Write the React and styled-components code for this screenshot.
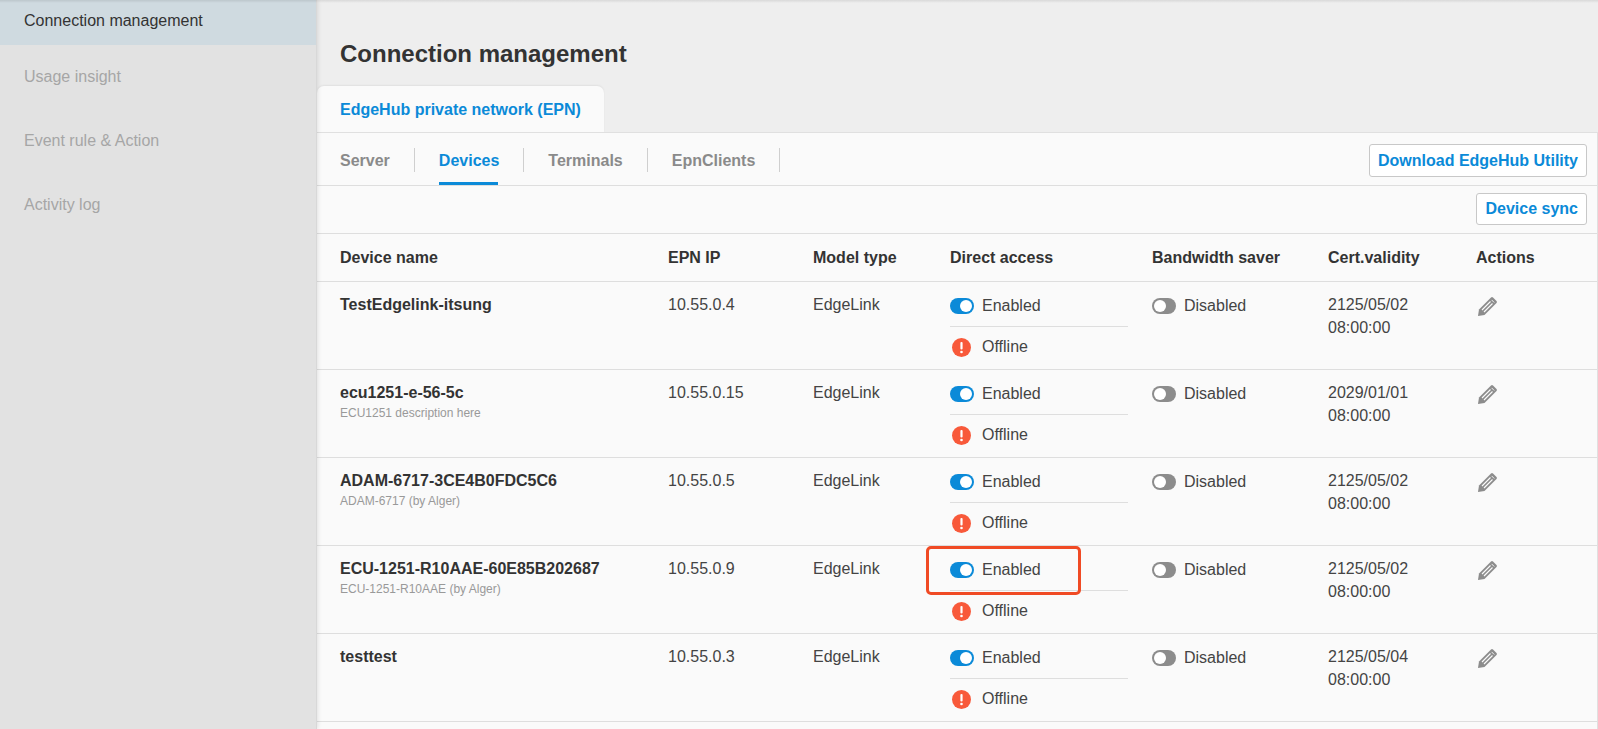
import React from 'react'
import styled, { createGlobalStyle } from 'styled-components'

const GlobalStyle = createGlobalStyle`
  html, body {
    margin: 0;
    height: 100%;
    overflow: hidden;
    background: #eee;
    font-family: "Liberation Sans", Arial, sans-serif;
    color: #333;
  }
`

const Page = styled.div`
  position: relative;
  display: flex;
  height: 729px;
  width: 1598px;
  overflow: hidden;
  /* soft shadow of the header that is scrolled out of the picture */
  &::after {
    content: '';
    position: absolute;
    left: 0;
    right: 0;
    top: 0;
    height: 3px;
    background: linear-gradient(rgba(0, 0, 0, 0.09), rgba(0, 0, 0, 0));
    z-index: 2;
  }
`

const Sidebar = styled.nav`
  flex: 0 0 317px;
  box-sizing: border-box;
  background: #e2e2e2;
  border-right: 1px solid #d8d8d8;
  box-shadow: 1px 0 4px rgba(0, 0, 0, 0.1);
  position: relative;
  z-index: 1;
`

const NavItem = styled.div`
  height: ${p => p.$h}px;
  padding: ${p => p.$top}px 0 0 24px;
  box-sizing: border-box;
  font-size: 16px;
  line-height: 20px;
  color: ${p => (p.$active ? '#333' : '#a6a6a6')};
  background: ${p => (p.$active ? '#cfdae0' : 'transparent')};
`

const Main = styled.main`
  flex: 1;
  min-width: 0;
  display: flex;
  flex-direction: column;
`

const Title = styled.h1`
  margin: 0;
  height: 86px;
  padding: 40px 0 0 23px;
  box-sizing: border-box;
  font-size: 24px;
  line-height: 27px;
  font-weight: 700;
  color: #333;
`

const TabStrip = styled.div`
  display: flex;
  height: 47px;
`

const Tab = styled.div`
  width: 287px;
  box-sizing: border-box;
  padding: 15px 0 0 23px;
  background: #fafafa;
  border-radius: 7px 7px 0 0;
  box-shadow: 0 -1px 2px rgba(0, 0, 0, 0.06);
  color: #0b8ad8;
  font-size: 16px;
  line-height: 18px;
  font-weight: 700;
`

const Panel = styled.section`
  flex: 1;
  background: #fafafa;
  border-top: 1px solid #e0e0e0;
  margin-top: -1px;
  border-right: 1px solid #e0e0e0;
`

const SubBar = styled.div`
  display: flex;
  align-items: flex-start;
  justify-content: space-between;
  height: 53px;
  box-sizing: border-box;
  border-bottom: 1px solid #dedede;
  padding: 0 10px 0 23px;
`

const SubTabs = styled.div`
  display: flex;
  height: 52px;
`

const SubTab = styled.div`
  position: relative;
  height: 100%;
  box-sizing: border-box;
  padding: 18px 25px 0 0;
  margin-right: 24px;
  font-size: 16px;
  line-height: 20px;
  font-weight: 700;
  color: ${p => (p.$active ? '#0b8ad8' : '#8a8a8a')};
  border-bottom: 3px solid transparent;
  &::after {
    content: '';
    position: absolute;
    right: 0;
    top: 15px;
    height: 24px;
    width: 1px;
    background: #cfcfcf;
  }
  &::before {
    content: '';
    display: ${p => (p.$active ? 'block' : 'none')};
    position: absolute;
    left: 0;
    right: 26px;
    bottom: -3px;
    height: 3px;
    background: #0b8ad8;
  }
`

const OutlineButton = styled.button`
  height: 33px;
  padding: 0 8px;
  box-sizing: border-box;
  background: #fff;
  border: 1px solid #c8c8c8;
  border-radius: 3px;
  color: #0b8ad8;
  font-family: inherit;
  font-size: 16px;
  font-weight: 700;
  margin-top: 11px;
`

const ActionBar = styled.div`
  display: flex;
  justify-content: flex-end;
  height: 48px;
  box-sizing: border-box;
  border-bottom: 1px solid #dedede;
  padding-right: 10px;
  ${OutlineButton} {
    height: 32px;
    margin-top: 7px;
  }
`

const cols = '328px 145px 137px 202px 176px 148px 1fr'

const HeadRow = styled.div`
  display: grid;
  grid-template-columns: ${cols};
  height: 48px;
  box-sizing: border-box;
  padding-left: 23px;
  align-items: center;
  border-bottom: 1px solid #dedede;
  font-size: 16px;
  font-weight: 700;
  color: #333;
`

const Row = styled.div`
  display: grid;
  grid-template-columns: ${cols};
  height: 88px;
  box-sizing: border-box;
  padding-left: 23px;
  border-bottom: 1px solid #dedede;
  font-size: 16px;
  color: #444;
`

const Cell = styled.div`
  padding-top: 12px;
  line-height: 22px;
`

const DateLine = styled.div`
  line-height: 22px;
  & + & {
    margin-top: 1px;
  }
`

const DeviceName = styled.div`
  font-weight: 700;
  color: #333;
  line-height: 22px;
`

const DeviceDesc = styled.div`
  font-size: 12px;
  line-height: 14px;
  color: #999;
  margin-top: 2px;
`

const AccessCell = styled.div`
  width: 178px;
`

const AccessLine = styled.div`
  position: relative;
  display: flex;
  align-items: center;
  gap: 8px;
  height: 45px;
  box-sizing: border-box;
  padding-top: 4px;
  border-bottom: 1px solid #dedede;
`

const StatusLine = styled.div`
  display: flex;
  align-items: center;
  gap: 8px;
  height: 40px;
`

const Toggle = styled.span`
  position: relative;
  flex: none;
  width: 24px;
  height: 16px;
  border-radius: 8px;
  background: ${p => (p.$on ? '#0b8ad8' : '#8c8c8c')};
  &::after {
    content: '';
    position: absolute;
    top: 2px;
    left: ${p => (p.$on ? '10px' : '2px')};
    width: 12px;
    height: 12px;
    border-radius: 50%;
    background: #fff;
  }
`

const ToggleCell = styled(Cell)`
  display: flex;
  align-items: flex-start;
  gap: 8px;
  padding-top: 13px;
  ${Toggle} {
    margin-top: 3px;
  }
`

const Highlight = styled.span`
  position: absolute;
  left: -24px;
  top: 0;
  width: 155px;
  height: 49px;
  box-sizing: border-box;
  border: 3px solid #f04a24;
  border-radius: 5px;
  pointer-events: none;
`

const WarnIcon = styled.span`
  flex: none;
  width: 19px;
  height: 19px;
  margin: 0 3px 0 2px;
`

const EditButton = styled.div`
  padding: 14px 0 0 1px;
`

const PencilIcon = () => (
  <svg width="21" height="21" viewBox="0 0 21 21" fill="none">
    <path d="M1 20l1-6.5L14 1.5q1-1 2 0L19.5 5q1 1 0 2L7.5 19 1 20z" fill="#8c8c8c" />
    <path d="M5 14l8.5-8.5M7 16l8.5-8.5" stroke="#fafafa" strokeWidth="1.2" />
    <path d="M14.6 3.9l2.6 2.6" stroke="#fafafa" strokeWidth="0.9" />
  </svg>
)

const Warning = () => (
  <WarnIcon>
    <svg width="19" height="19" viewBox="0 0 19 19">
      <circle cx="9.5" cy="9.5" r="9.5" fill="#f8593a" />
      <rect x="8.4" y="4" width="2.2" height="7.6" rx="1" fill="#fff" />
      <circle cx="9.5" cy="14" r="1.3" fill="#fff" />
    </svg>
  </WarnIcon>
)

const devices = [
  { name: 'TestEdgelink-itsung', ip: '10.55.0.4', date: '2125/05/02' },
  { name: 'ecu1251-e-56-5c', desc: 'ECU1251 description here', ip: '10.55.0.15', date: '2029/01/01' },
  { name: 'ADAM-6717-3CE4B0FDC5C6', desc: 'ADAM-6717 (by Alger)', ip: '10.55.0.5', date: '2125/05/02' },
  { name: 'ECU-1251-R10AAE-60E85B202687', desc: 'ECU-1251-R10AAE (by Alger)', ip: '10.55.0.9', date: '2125/05/02', marked: true },
  { name: 'testtest', ip: '10.55.0.3', date: '2125/05/04' },
]

const App = () => (
  <Page>
    <GlobalStyle />
    <Sidebar>
      <NavItem $active $h={45} $top={11}>Connection management</NavItem>
      <NavItem $h={64} $top={22}>Usage insight</NavItem>
      <NavItem $h={64} $top={22}>Event rule &amp; Action</NavItem>
      <NavItem $h={64} $top={22}>Activity log</NavItem>
    </Sidebar>
    <Main>
      <Title>Connection management</Title>
      <TabStrip>
        <Tab>EdgeHub private network (EPN)</Tab>
      </TabStrip>
      <Panel>
        <SubBar>
          <SubTabs>
            <SubTab>Server</SubTab>
            <SubTab $active>Devices</SubTab>
            <SubTab>Terminals</SubTab>
            <SubTab>EpnClients</SubTab>
          </SubTabs>
          <OutlineButton>Download EdgeHub Utility</OutlineButton>
        </SubBar>
        <ActionBar>
          <OutlineButton>Device sync</OutlineButton>
        </ActionBar>
        <HeadRow>
          <div>Device name</div>
          <div>EPN IP</div>
          <div>Model type</div>
          <div>Direct access</div>
          <div>Bandwidth saver</div>
          <div>Cert.validity</div>
          <div>Actions</div>
        </HeadRow>
        {devices.map(d => (
          <Row key={d.name}>
            <Cell>
              <DeviceName>{d.name}</DeviceName>
              {d.desc && <DeviceDesc>{d.desc}</DeviceDesc>}
            </Cell>
            <Cell>{d.ip}</Cell>
            <Cell>EdgeLink</Cell>
            <AccessCell>
              <AccessLine>
                <Toggle $on />
                Enabled
                {d.marked && <Highlight />}
              </AccessLine>
              <StatusLine>
                <Warning />
                Offline
              </StatusLine>
            </AccessCell>
            <ToggleCell>
              <Toggle />
              Disabled
            </ToggleCell>
            <Cell>
              <DateLine>{d.date}</DateLine>
              <DateLine>08:00:00</DateLine>
            </Cell>
            <EditButton>
              <PencilIcon />
            </EditButton>
          </Row>
        ))}
      </Panel>
    </Main>
  </Page>
)

export default App
